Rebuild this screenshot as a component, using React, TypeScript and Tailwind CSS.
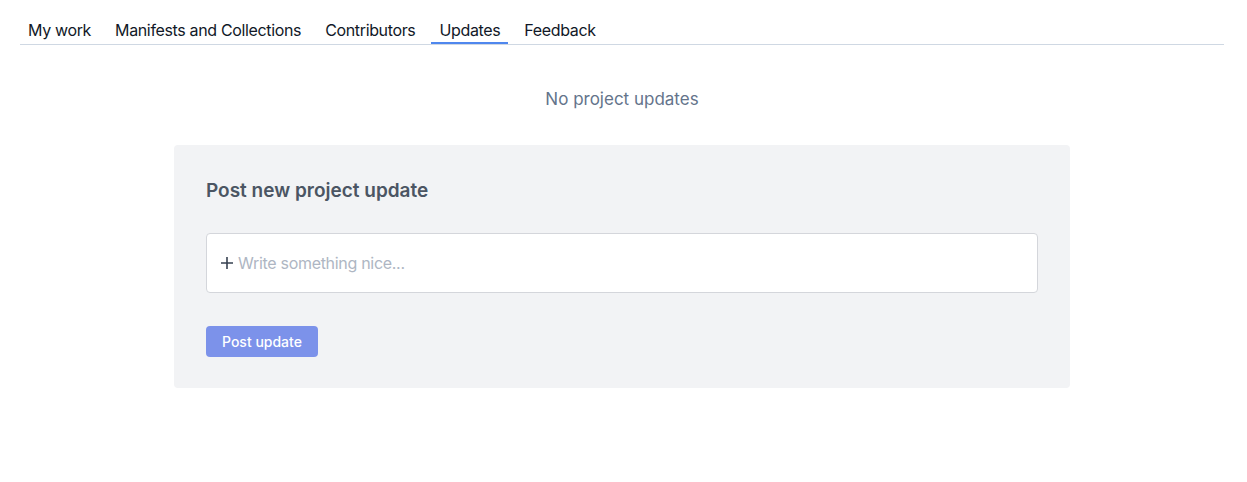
import React from "react";

export default function App() {
  const tabs = ["My work", "Manifests and Collections", "Contributors", "Updates", "Feedback"];
  return (
    <div className="min-h-[482px] w-[1244px] bg-white px-5 pt-[18px]" style={{ fontFamily: "Inter, 'Noto Sans', sans-serif" }}>
      <div className="flex gap-2 border-b border-[#cfd8e3]">
        {tabs.map((t) => (
          <div
            key={t}
            className={
              "px-2 text-[16px] leading-6 tracking-[-0.35px] border-b-2 text-[#111827] " +
              (t === "Updates" ? "border-[#4f87ee]" : "border-transparent")
            }
          >
            {t}
          </div>
        ))}
      </div>
      <div className="mt-[42px] text-center text-[17px] leading-6 text-[#64748b]">No project updates</div>
      <div className="mx-auto mt-[34px] w-[896px] rounded bg-[#f2f3f5] px-8 pt-[32px] pb-[31px]">
        <h2 className="text-[19px] font-semibold leading-7 text-[#4b5563]">Post new project update</h2>
        <div className="mt-[28px] flex h-[60px] items-center rounded border border-[#d4d6db] bg-white pl-[13px]">
          <svg width="14" height="14" viewBox="0 0 14 14" className="mr-[4px]">
            <path d="M7 1v12M1 7h12" stroke="#374151" strokeWidth="1.6" />
          </svg>
          <span className="text-[16px] tracking-[-0.3px] text-[#aeb6c3]">Write something nice...</span>
        </div>
        <button className="mt-[33px] h-[31px] rounded bg-[#7c92ea] px-[16px] text-[14px] font-medium text-white">
          Post update
        </button>
      </div>
    </div>
  );
}
